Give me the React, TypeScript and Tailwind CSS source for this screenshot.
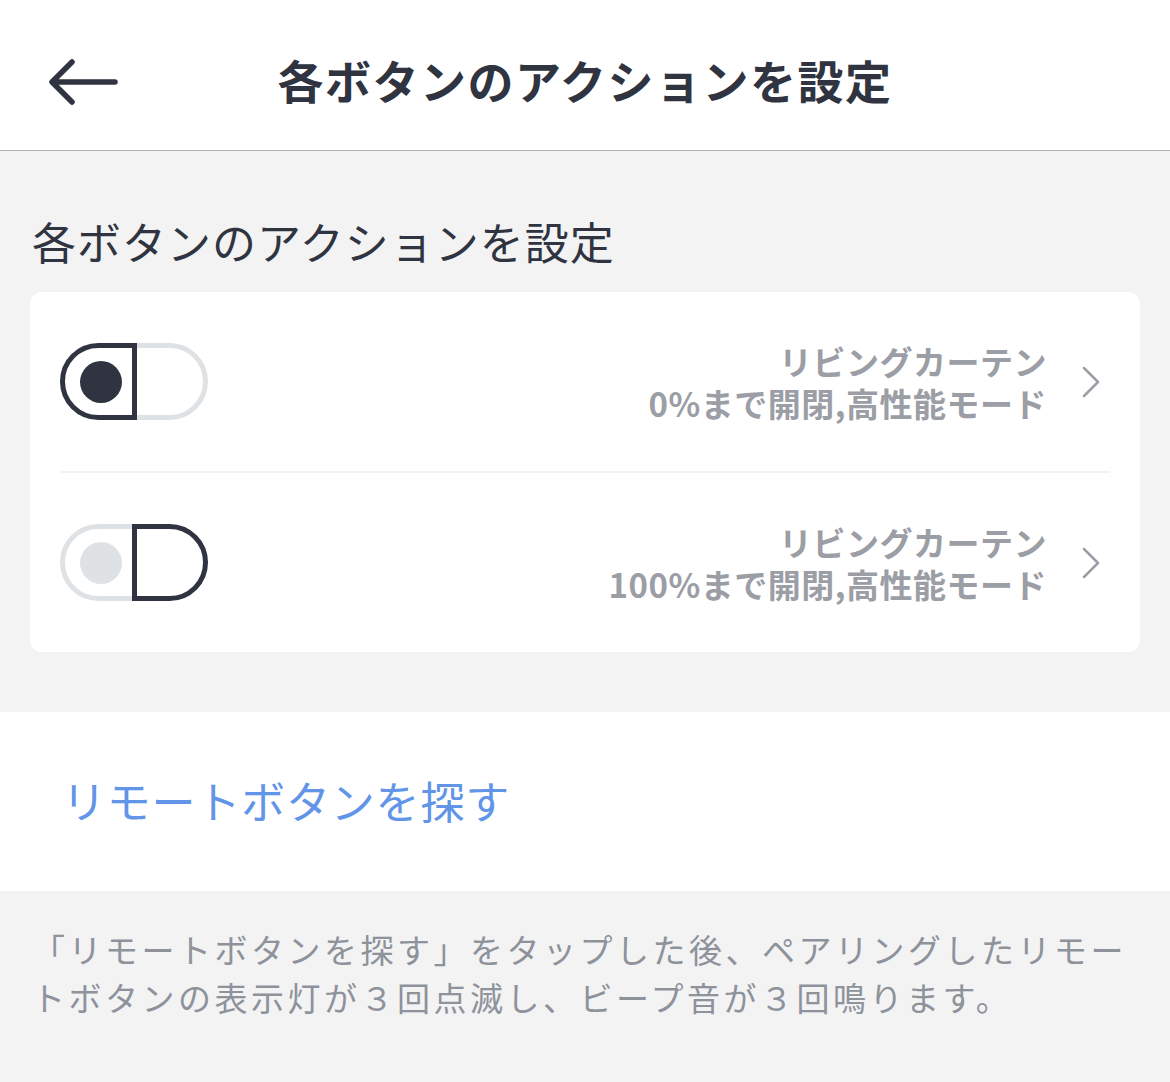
import React from 'react'

const FONT = { fontFamily: '"Noto Sans CJK JP", "Noto Sans", sans-serif' }

function Toggle({ side }: { side: 'left' | 'right' }) {
  const dark = '#2f3440'
  const light = '#dfe2e5'
  const leftActive = side === 'left'
  return (
    <svg width="148" height="77" viewBox="0 0 148 77" fill="none">
      {/* right half */}
      <path
        d="M74.5 2.5 H109.5 A36 36 0 0 1 109.5 74.5 H74.5"
        stroke={leftActive ? light : dark}
        strokeWidth="5"
      />
      {/* left half */}
      <path
        d="M74.5 2.5 H38.5 A36 36 0 0 0 38.5 74.5 H74.5"
        stroke={leftActive ? dark : light}
        strokeWidth="5"
      />
      {/* split line */}
      <line x1="74.5" y1="0" x2="74.5" y2="77" stroke={dark} strokeWidth="5" />
      <circle cx="41" cy="39" r="21" fill={leftActive ? dark : light} />
    </svg>
  )
}

function Chevron() {
  return (
    <svg width="18" height="32" viewBox="0 0 18 32" fill="none">
      <path d="M2 2 L16 16 L2 30" stroke="#9b9ea5" strokeWidth="2.5" strokeLinecap="round" strokeLinejoin="round" />
    </svg>
  )
}

function ActionRow({ side, line1, line2 }: { side: 'left' | 'right'; line1: string; line2: string }) {
  return (
    <div className="flex h-[179px] items-center pl-[30px] pr-[40px]">
      <Toggle side={side} />
      <div className="ml-auto text-right text-[33px] font-semibold leading-[42px] tracking-[0.5px] text-[#9b9ea5]">
        <div>{line1}</div>
        <div>{line2}</div>
      </div>
      <div className="ml-[35px]">
        <Chevron />
      </div>
    </div>
  )
}

export default function App() {
  return (
    <div className="min-h-[1082px] w-[1170px] bg-[#f3f3f3]" style={FONT}>
      {/* header */}
      <div className="relative flex h-[151px] items-center justify-center border-b border-[#b4b4b4] bg-white pt-[8px]">
        <button className="absolute left-[48px] top-[58px]">
          <svg width="72" height="48" viewBox="0 0 72 48" fill="none">
            <path
              d="M5 24 H67 M24 4 L4 24 L24 44"
              stroke="#2f3440"
              strokeWidth="5.5"
              strokeLinecap="round"
              strokeLinejoin="round"
            />
          </svg>
        </button>
        <h1 className="text-[46px] font-bold tracking-[1.5px] text-[#2f3440]">各ボタンのアクションを設定</h1>
      </div>

      {/* actions */}
      <div className="pb-[60px] pt-[60px]">
        <p className="mb-[21px] pl-[32px] text-[44px] leading-[60px] tracking-[1px] text-[#2f3440]">各ボタンのアクションを設定</p>
        <div className="mx-[30px] rounded-[12px] bg-white">
          <ActionRow side="left" line1="リビングカーテン" line2="0%まで開閉,高性能モード" />
          <div className="mx-[30px] h-[2px] bg-[#f3f3f3]" />
          <ActionRow side="right" line1="リビングカーテン" line2="100%まで開閉,高性能モード" />
        </div>
      </div>

      {/* find button */}
      <div className="flex h-[179px] items-center bg-white pb-[4px] pl-[62px]">
        <span className="text-[44px] tracking-[0.8px] text-[#6294e8]">リモートボタンを探す</span>
      </div>

      {/* note */}
      <p className="px-[32px] pt-[34px] text-[33px] leading-[48px] tracking-[3.5px] text-[#8d929b]">
        「リモートボタンを探す」をタップした後、ペアリングしたリモートボタンの表示灯が３回点滅し、ビープ音が３回鳴ります。
      </p>
    </div>
  )
}
